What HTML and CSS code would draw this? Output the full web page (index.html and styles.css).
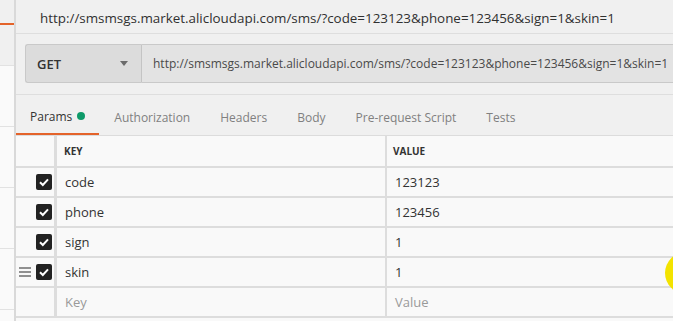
FILE: index.html
```html
<!DOCTYPE html>
<html>
<head>
<meta charset="utf-8">
<link rel="stylesheet" href="styles.css">
</head>
<body>
<div class="sidebar">
  <div class="side-top"><div class="side-accent"></div></div>
  <div class="side-item"></div>
  <div class="side-item"></div>
  <div class="side-item"></div>
  <div class="side-item"></div>
</div>
<div class="main">
  <div class="title">http://smsmsgs.market.alicloudapi.com/sms/?code=123123&amp;phone=123456&amp;sign=1&amp;skin=1</div>
  <div class="reqbar">
    <div class="method">
      <span>GET</span>
      <svg class="caret" width="8" height="5" viewBox="0 0 8 5"><path d="M0 0 L8 0 L4 5 Z" fill="#6b6b6b"/></svg>
    </div>
    <div class="url">http://smsmsgs.market.alicloudapi.com/sms/?code=123123&amp;phone=123456&amp;sign=1&amp;skin=1</div>
  </div>
  <div class="tabs">
    <div class="tab active">Params <span class="dot"></span></div>
    <div class="tab">Authorization</div>
    <div class="tab">Headers</div>
    <div class="tab">Body</div>
    <div class="tab">Pre-request Script</div>
    <div class="tab">Tests</div>
  </div>
  <div class="table">
    <div class="row head">
      <div class="c-check"></div>
      <div class="c-key">KEY</div>
      <div class="c-val">VALUE</div>
    </div>
    <div class="row">
      <div class="c-check"><span class="cb"><svg width="16" height="16" viewBox="0 0 16 16"><path d="M4 8.3 L6.8 11 L12 5.3" fill="none" stroke="#fff" stroke-width="2"/></svg></span></div>
      <div class="c-key">code</div>
      <div class="c-val">123123</div>
    </div>
    <div class="row">
      <div class="c-check"><span class="cb"><svg width="16" height="16" viewBox="0 0 16 16"><path d="M4 8.3 L6.8 11 L12 5.3" fill="none" stroke="#fff" stroke-width="2"/></svg></span></div>
      <div class="c-key">phone</div>
      <div class="c-val">123456</div>
    </div>
    <div class="row">
      <div class="c-check"><span class="cb"><svg width="16" height="16" viewBox="0 0 16 16"><path d="M4 8.3 L6.8 11 L12 5.3" fill="none" stroke="#fff" stroke-width="2"/></svg></span></div>
      <div class="c-key">sign</div>
      <div class="c-val">1</div>
    </div>
    <div class="row">
      <div class="c-check">
        <svg class="drag" width="12" height="10" viewBox="0 0 12 10"><path d="M0 1 H12 M0 5 H12 M0 9 H12" stroke="#6e6e6e" stroke-width="1.6"/></svg>
        <span class="cb"><svg width="16" height="16" viewBox="0 0 16 16"><path d="M4 8.3 L6.8 11 L12 5.3" fill="none" stroke="#fff" stroke-width="2"/></svg></span>
      </div>
      <div class="c-key">skin</div>
      <div class="c-val">1</div>
    </div>
    <div class="row">
      <div class="c-check"></div>
      <div class="c-key ph">Key</div>
      <div class="c-val ph">Value</div>
    </div>
  </div>
</div>
<div class="cursor-dot"></div>
</body>
</html>
```

FILE: styles.css
```css
html, body {
  margin: 0;
  padding: 0;
}
body {
  width: 673px;
  height: 321px;
  overflow: hidden;
  display: flex;
  font-family: "Open Sans", "Noto Sans", sans-serif;
  background: #f0f0f0;
  position: relative;
}
.sidebar {
  width: 14px;
  flex: none;
  border-right: 2px solid #d9d9d9;
  background: #fafafa;
}
.side-top {
  height: 66px;
  background: #f0f0f0;
  border-bottom: 1px solid #e2e2e2;
  box-sizing: border-box;
  padding-top: 23px;
}
.side-accent {
  height: 2px;
  background: #e4632a;
}
.side-item {
  height: 61px;
  border-bottom: 1px solid #e2e2e2;
  box-sizing: border-box;
}
.main {
  flex: 1;
  min-width: 0;
  display: flex;
  flex-direction: column;
}
.main > * {
  flex: none;
}
.title {
  height: 34px;
  box-sizing: border-box;
  padding-left: 24px;
  padding-top: 9px;
  font-size: 13.4px;
  color: #303030;
  white-space: nowrap;
  border-bottom: 1px solid #dedede;
}
.reqbar {
  display: flex;
  padding: 10px 0 10px 9px;
  border-bottom: 1px solid #dedede;
  height: 61px;
  box-sizing: border-box;
}
.method {
  width: 117px;
  flex: none;
  height: 39px;
  box-sizing: border-box;
  border: 1px solid #c9c9c9;
  border-right: 1px solid #c4c4c4;
  border-radius: 3px 0 0 3px;
  background: #dcdcdc;
  display: flex;
  align-items: center;
  justify-content: space-between;
  padding: 0 13px 0 11px;
  font-size: 13px;
  font-weight: 600;
  color: #333;
}
.caret {
  display: block;
}
.url {
  flex: 1;
  height: 39px;
  box-sizing: border-box;
  border-top: 1px solid #c9c9c9;
  border-bottom: 1px solid #c9c9c9;
  background: #e3e3e3;
  padding-left: 11px;
  display: flex;
  align-items: center;
  font-size: 12px;
  color: #4a4a4a;
  white-space: nowrap;
  overflow: hidden;
}
.tabs {
  display: flex;
  height: 41px;
  box-sizing: border-box;
  border-bottom: 1px solid #dcdcdc;
}
.tab {
  padding: 0 15px;
  display: flex;
  align-items: center;
  font-size: 12px;
  color: #808080;
  white-space: nowrap;
  box-sizing: border-box;
  padding-top: 4px;
}
.tab.active {
  color: #333;
  padding: 4px 14px 0;
  border-bottom: 2px solid #e4632a;
}
.dot {
  width: 8px;
  height: 8px;
  border-radius: 50%;
  background: #0e9a69;
  margin-left: 5px;
  display: inline-block;
}
.table {
  background: #f9f9f9;
  flex: 1 1 auto;
}
.row {
  display: flex;
  height: 28px;
  border-bottom: 2px solid #dddddd;
}
.row.head {
  height: 30px;
}
.c-check {
  width: 41px;
  flex: none;
  border-right: 3px solid #dddddd;
  display: flex;
  align-items: center;
  justify-content: flex-end;
  padding-right: 2px;
  box-sizing: border-box;
  position: relative;
}
.c-key {
  width: 330px;
  flex: none;
  border-right: 2px solid #dddddd;
  display: flex;
  align-items: center;
  padding-left: 8px;
  box-sizing: border-box;
  font-size: 13px;
  color: #333;
}
.c-val {
  flex: 1;
  display: flex;
  align-items: center;
  padding-left: 8px;
  font-size: 13px;
  color: #333;
}
.head .c-key, .head .c-val {
  font-size: 10px;
  font-weight: 700;
  color: #333;
  padding-left: 7px;
}
.head .c-val {
  padding-left: 6px;
}
.ph {
  color: #9a9a9a;
}
.cb {
  width: 16px;
  height: 16px;
  border-radius: 2px;
  background: #222;
  display: block;
}
.cb svg {
  display: block;
}
.drag {
  position: absolute;
  left: 3px;
  top: 9px;
}
.cursor-dot {
  position: absolute;
  left: 665px;
  top: 252px;
  width: 42px;
  height: 42px;
  border-radius: 50%;
  background: #f3e300;
}
```
